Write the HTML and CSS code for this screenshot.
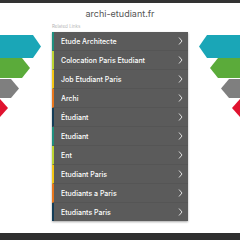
FILE: index.html
```html
<!DOCTYPE html>
<html lang="fr">

<head>
  <meta charset="UTF-8" />
  <meta name="viewport" content="width=device-width, initial-scale=1.0" />
  <title>archi-etudiant.fr</title>
  <link rel="stylesheet" href="styles.css">
</head>

<body>
  <div class="topbar"></div>
  <header class="site">archi-etudiant.fr</header>

  <main class="stage">
    <svg class="deco" viewBox="0 0 52 100" width="52" height="100">
      <polygon fill="#1aa6b7" points="0,13 33,13 41,24.5 33,36 0,36" />
      <polygon fill="#5bab3a" points="0,36 22,36 30,46 22,56 0,56" />
      <polygon fill="#7f7f7f" points="0,57 11,57 19,66.5 11,76 0,76" />
      <polygon fill="#e0132f" points="0,77 0,77 8,86 0,95" />
    </svg>

    <section class="links">
      <p class="label">Related Links</p>
      <ul>
        <li class="c-teal"><a href="#">Etude Architecte</a></li>
        <li class="c-lime"><a href="#">Colocation Paris Etudiant</a></li>
        <li class="c-yellow"><a href="#">Job Etudiant Paris</a></li>
        <li class="c-orange"><a href="#">Archi</a></li>
        <li class="c-navy"><a href="#">Étudiant</a></li>
        <li class="c-teal"><a href="#">Etudiant</a></li>
        <li class="c-lime"><a href="#">Ent</a></li>
        <li class="c-yellow"><a href="#">Etudiant Paris</a></li>
        <li class="c-orange"><a href="#">Etudiants a Paris</a></li>
        <li class="c-navy"><a href="#">Etudiants Paris</a></li>
      </ul>
    </section>

    <svg class="deco" viewBox="0 0 52 100" width="52" height="100">
      <polygon fill="#1aa6b7" points="11,24.5 19,13 52,13 52,36 19,36" />
      <polygon fill="#5bab3a" points="22,46 30,36 52,36 52,56 30,56" />
      <polygon fill="#7f7f7f" points="33,66.5 41,57 52,57 52,76 41,76" />
      <polygon fill="#e0132f" points="44,86 52,77 52,95" />
    </svg>
  </main>

  <footer class="foot">
    <p>Privacy Policy</p>
  </footer>

  <script>
    // chevron on every link
    document.querySelectorAll('.links a').forEach(a => {
      a.insertAdjacentHTML('beforeend',
        '<svg class="chev" viewBox="0 0 5 8" width="5" height="8"><polyline points="1,0.5 4,4 1,7.5" /></svg>');
    });
  </script>
</body>

</html>
```

FILE: styles.css
```css
* {
  margin: 0;
  padding: 0;
  box-sizing: border-box;
}

body {
  background: #fff;
  font-family: Inter, 'Open Sans', sans-serif;
  width: 240px;
  height: 240px;
  overflow: hidden;
}

.topbar {
  height: 3px;
  background-color: #333;
}

.site {
  height: 19px;
  line-height: 22px;
  text-align: center;
  color: #555;
  font-size: 9px;
  font-weight: 400;
}

.stage {
  display: grid;
  grid-template-columns: 52px 136px 52px;
  align-items: start;
}

.deco {
  display: block;
}

.label {
  height: 10px;
  line-height: 10px;
  font-size: 4.5px;
  color: #b5b5b5;
}

.links ul {
  list-style: none;
  box-shadow: 0 1px 2px rgba(0, 0, 0, 0.35);
}

.links li {
  background-color: #5b5b5b;
  border-left: 2px solid #999;
  border-bottom: 1px solid #555;
}

.links li:last-child {
  border-bottom: none;
}

.links a {
  display: flex;
  justify-content: space-between;
  align-items: center;
  height: 18px;
  padding: 0 5px 0 7px;
  color: #fff;
  font-size: 7px;
  font-weight: 500;
  text-decoration: none;
}

.chev {
  fill: none;
  stroke: #fff;
  stroke-width: 0.8;
}

.c-teal { border-left-color: #1f8f7e !important; }
.c-lime { border-left-color: #bcd432 !important; }
.c-yellow { border-left-color: #f3c614 !important; }
.c-orange { border-left-color: #e8761c !important; }
.c-navy { border-left-color: #143d58 !important; }

.foot {
  margin-top: 12px;
  height: 20px;
  background-color: #2f2f2f;
  padding-top: 13px;
  text-align: center;
}

.foot p {
  font-size: 6px;
  color: #aaa;
}
```
